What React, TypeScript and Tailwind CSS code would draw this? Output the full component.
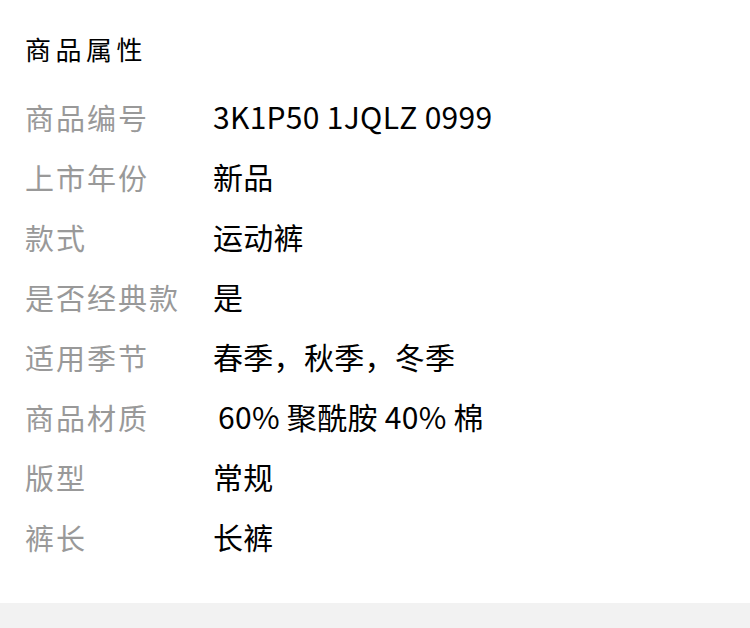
import React from 'react';

const rows: { label: string; value: string; indent?: boolean }[] = [
    { label: '商品编号', value: '3K1P50 1JQLZ 0999' },
    { label: '上市年份', value: '新品' },
    { label: '款式', value: '运动裤' },
    { label: '是否经典款', value: '是' },
    { label: '适用季节', value: '春季，秋季，冬季' },
    { label: '商品材质', value: '60% 聚酰胺 40% 棉', indent: true },
    { label: '版型', value: '常规' },
    { label: '裤长', value: '长裤' },
];

export default function App() {
    return (
        <div className="w-[750px] h-[628px] bg-white flex flex-col overflow-hidden font-['Noto_Sans_CJK_SC',sans-serif]">
            <div className="px-[25px] pt-[18px]">
                {/* Section title */}
                <h2 className="h-[60px] flex items-center text-[26px] tracking-[4.5px] text-black">商品属性</h2>

                <div className="mt-[8px]">
                    {rows.map(r => (
                        <div key={r.label} className="h-[60px] flex items-center">
                            <span className="w-[188px] shrink-0 mt-[3px] text-[29px] tracking-[2px] text-[#999999]">{r.label}</span>
                            <span className={`text-[30px] tracking-[0.3px] text-black ${r.indent ? 'pl-[5px]' : ''}`}>{r.value}</span>
                        </div>
                    ))}
                </div>
            </div>

            <div className="flex-1" />
            <div className="h-[25px] bg-[#f2f2f2]" />
        </div>
    );
}
